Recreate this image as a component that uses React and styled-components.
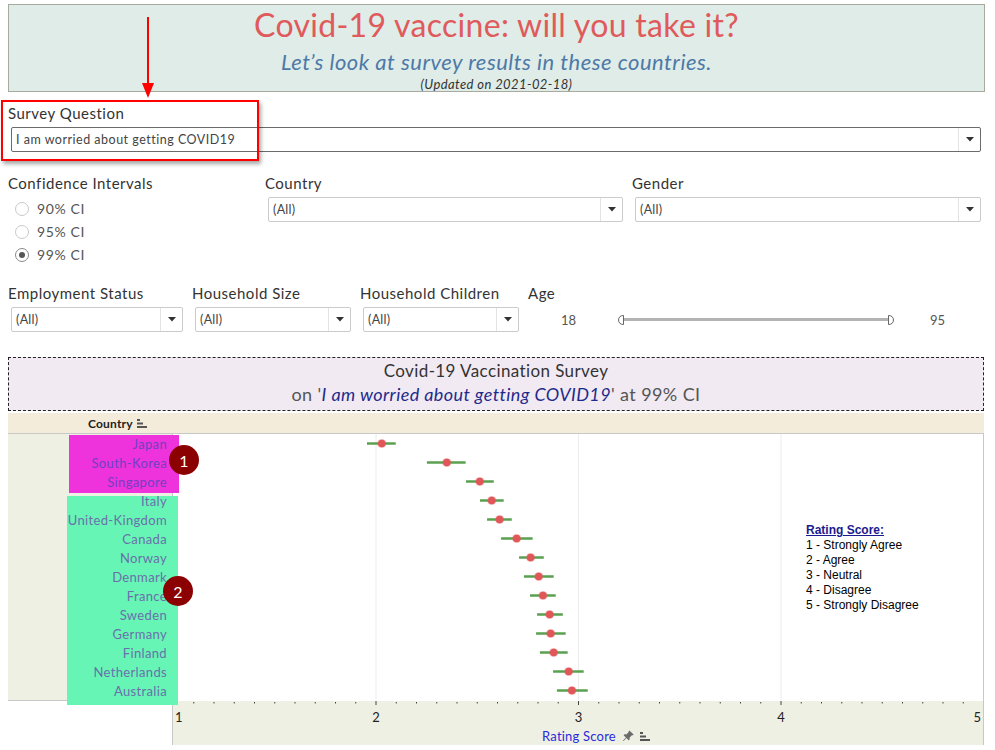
import React from 'react';
import styled, { createGlobalStyle } from 'styled-components';
import { BsPinAngleFill } from 'react-icons/bs';

const GlobalStyle = createGlobalStyle`
  html, body { margin: 0; padding: 0; background: #fff; }
  body { font-family: Lato, "Open Sans", sans-serif; color: #333; }
  * { box-sizing: border-box; }
`;

const rows = [
  { name: 'Japan', mean: 2.031, lo: 1.958, hi: 2.1, group: 1 },
  { name: 'South-Korea', mean: 2.352, lo: 2.254, hi: 2.445, group: 1 },
  { name: 'Singapore', mean: 2.515, lo: 2.447, hi: 2.584, group: 1 },
  { name: 'Italy', mean: 2.574, lo: 2.516, hi: 2.633, group: 2 },
  { name: 'United-Kingdom', mean: 2.613, lo: 2.551, hi: 2.673, group: 2 },
  { name: 'Canada', mean: 2.697, lo: 2.62, hi: 2.776, group: 2 },
  { name: 'Norway', mean: 2.766, lo: 2.709, hi: 2.831, group: 2 },
  { name: 'Denmark', mean: 2.806, lo: 2.733, hi: 2.88, group: 2 },
  { name: 'France', mean: 2.827, lo: 2.763, hi: 2.89, group: 2 },
  { name: 'Sweden', mean: 2.86, lo: 2.798, hi: 2.925, group: 2 },
  { name: 'Germany', mean: 2.865, lo: 2.793, hi: 2.939, group: 2 },
  { name: 'Finland', mean: 2.88, lo: 2.812, hi: 2.949, group: 2 },
  { name: 'Netherlands', mean: 2.954, lo: 2.877, hi: 3.028, group: 2 },
  { name: 'Australia', mean: 2.97, lo: 2.896, hi: 3.048, group: 2 },
];

const PLOT_W = 810;
const ROW_H = 19;
const sx = (v) => (v - 1) * (PLOT_W / 4);

function SortIcon() {
  return (
    <svg width="10" height="9" viewBox="0 0 10 9">
      <rect x="0" y="0" width="3" height="2" fill="#555" />
      <rect x="0" y="3.5" width="6" height="2" fill="#555" />
      <rect x="0" y="7" width="10" height="2" fill="#555" />
    </svg>
  );
}

function Arrow() {
  return (
    <svg width="14" height="81" viewBox="0 0 14 81">
      <line x1="7" y1="0" x2="7" y2="67" stroke="#f00" strokeWidth="2" />
      <polygon points="1,66 13,66 7,81" fill="#f00" />
    </svg>
  );
}

function Select({ value, width, active }) {
  return (
    <SelectBox $width={width} $active={active}>
      <SelectText $wide={active}>{value}</SelectText>
      <SelectArrow>
        <svg width="8" height="5" viewBox="0 0 8 5">
          <polygon points="0,0 8,0 4,4.5" fill="#333" />
        </svg>
      </SelectArrow>
    </SelectBox>
  );
}

function Filter({ label, width, value = '(All)' }) {
  return (
    <FilterCol $width={width}>
      <Label>{label}</Label>
      <Select value={value} width={width - 12} />
    </FilterCol>
  );
}

function Chart() {
  const ticks = [];
  for (let i = 1; i < 40; i++) {
    if (i % 10 !== 0) ticks.push(i / 10 + 1);
  }
  return (
    <ChartWrap>
      <ChartHead>
        <HeadLabel>
          Country <SortIcon />
        </HeadLabel>
      </ChartHead>
      <ChartBody>
        <Highlight $tone="#ee33dd" $top={1} $left={61} $w={110} $h={58} />
        <Highlight $tone="#66f5b4" $top={62} $left={59} $w={111} $h={209} />
        <LabelCol>
          {rows.map((r) => (
            <CountryLabel key={r.name} $group={r.group}>
              {r.name}
            </CountryLabel>
          ))}
        </LabelCol>
        <Plot>
          <svg width={PLOT_W} height={rows.length * ROW_H}>
            {[2, 3, 4].map((v) => (
              <line key={v} x1={sx(v) + 0.5} x2={sx(v) + 0.5} y1="0" y2={rows.length * ROW_H} stroke="#ececec" />
            ))}
            {rows.map((r, i) => {
              const y = i * ROW_H + 9.5;
              return (
                <g key={r.name}>
                  <line x1={sx(r.lo)} x2={sx(r.hi)} y1={y} y2={y} stroke="#59a14f" strokeWidth="2.5" />
                  <circle cx={sx(r.mean)} cy={y} r="4.6" fill="#e15759" opacity="0.35" />
                  <circle cx={sx(r.mean)} cy={y} r="3.8" fill="#e15759" />
                </g>
              );
            })}
          </svg>
          <Legend>
            <LegendTitle>Rating Score:</LegendTitle>
            <div>1 - Strongly Agree</div>
            <div>2 - Agree</div>
            <div>3 - Neutral</div>
            <div>4 - Disagree</div>
            <div>5 - Strongly Disagree</div>
          </Legend>
        </Plot>
        <Badge $top={11} $left={161}>1</Badge>
        <Badge $top={142} $left={155}>2</Badge>
      </ChartBody>
      <AxisRow>
        <AxisBlank />
        <Axis>
          <svg width={PLOT_W} height="28">
            {ticks.map((t) => (
              <rect key={t} x={sx(t)} y="1" width="1" height="1.5" fill="#444" />
            ))}
            {[2, 3, 4].map((v) => (
              <rect key={v} x={sx(v)} y="0" width="1" height="4" fill="#444" />
            ))}
            <text x="2" y="21" fontSize="13" fill="#222" fontFamily="Lato, sans-serif">1</text>
            {[2, 3, 4].map((v) => (
              <text key={v} x={sx(v) + 0.5} y="21" fontSize="13" fill="#222" textAnchor="middle" fontFamily="Lato, sans-serif">
                {v}
              </text>
            ))}
            <text x={PLOT_W - 2} y="21" fontSize="13" fill="#222" textAnchor="end" fontFamily="Lato, sans-serif">5</text>
          </svg>
          <AxisTitle>
            Rating Score
            <BsPinAngleFill size={12} color="#6b6b6b" />
            <SortIcon />
          </AxisTitle>
        </Axis>
      </AxisRow>
    </ChartWrap>
  );
}

export default function App() {
  return (
    <Page>
      <GlobalStyle />
      <Header>
        <Title>Covid-19 vaccine: will you take it?</Title>
        <Subtitle>Let’s look at survey results in these countries.</Subtitle>
        <Updated>(Updated on 2021-02-18)</Updated>
      </Header>

      <QuestionBlock>
        <Label>Survey Question</Label>
        <QuestionSelect>
          <Select value="I am worried about getting COVID19" width={970} active />
        </QuestionSelect>
      </QuestionBlock>

      <FilterRow $top={23}>
        <FilterCol $width={257}>
          <Label>Confidence Intervals</Label>
          <RadioList>
            {['90% CI', '95% CI', '99% CI'].map((c) => (
              <RadioItem key={c}>
                <Radio $checked={c === '99% CI'} />
                {c}
              </RadioItem>
            ))}
          </RadioList>
        </FilterCol>
        <Filter label="Country" width={367} />
        <Filter label="Gender" width={358} />
      </FilterRow>

      <FilterRow $top={19}>
        <Filter label="Employment Status" width={184} />
        <Filter label="Household Size" width={168} />
        <Filter label="Household Children" width={168} />
        <FilterCol $width={453}>
          <Label>Age</Label>
          <AgeRow>
            <AgeValue $w={76}>18</AgeValue>
            <Slider>
              <Handle $side="left" />
              <Track />
              <Handle $side="right" />
            </Slider>
            <AgeValue $w={88}>95</AgeValue>
          </AgeRow>
        </FilterCol>
      </FilterRow>

      <ChartTitle>
        <ChartTitleMain>Covid-19 Vaccination Survey</ChartTitleMain>
        <ChartTitleSub>
          on '<Question>I am worried about getting COVID19</Question>' at 99% CI
        </ChartTitleSub>
      </ChartTitle>

      <Chart />

      <RedFrame />
      <ArrowSpot>
        <Arrow />
      </ArrowSpot>
    </Page>
  );
}

const Page = styled.div`
  position: relative;
  width: 995px;
  height: 750px;
  overflow: hidden;
`;

const Header = styled.div`
  margin: 4px 0 0 8px;
  width: 977px;
  height: 88px;
  background: #dfece8;
  border: 1px solid #a9aa9e;
  display: flex;
  flex-direction: column;
  align-items: center;
`;

const Title = styled.div`
  font-size: 32px;
  line-height: 40px;
  color: #e05a5b;
  letter-spacing: 0.3px;
`;

const Subtitle = styled.div`
  margin-top: 5px;
  font-size: 22px;
  line-height: 24px;
  font-style: italic;
  letter-spacing: 0.5px;
  color: #4e79a7;
`;

const Updated = styled.div`
  margin-top: 3px;
  font-size: 13px;
  line-height: 14px;
  font-style: italic;
  letter-spacing: 0.4px;
  color: #333;
`;

const QuestionBlock = styled.div`
  margin: 13px 0 0 8px;
`;

const Label = styled.div`
  font-size: 15px;
  line-height: 16px;
  letter-spacing: 0.5px;
  color: #333;
  white-space: nowrap;
`;

const QuestionSelect = styled.div`
  margin: 6px 0 0 3px;
`;

const SelectBox = styled.div`
  width: ${(p) => p.$width}px;
  height: 25px;
  display: flex;
  align-items: stretch;
  background: #fff;
  border: 1px solid ${(p) => (p.$active ? '#6b6b6b' : '#cbcbcb')};
  border-radius: 2px;
`;

const SelectText = styled.div`
  flex: 1;
  padding-left: 4px;
  font-size: 12.5px;
  line-height: 23px;
  letter-spacing: ${(p) => (p.$wide ? '0.5px' : '0.3px')};
  color: #444;
  white-space: nowrap;
  overflow: hidden;
`;

const SelectArrow = styled.div`
  width: 22px;
  border-left: 1px solid #e3e3e3;
  display: flex;
  align-items: center;
  justify-content: center;
`;

const FilterRow = styled.div`
  display: flex;
  margin: ${(p) => p.$top}px 0 0 8px;
`;

const FilterCol = styled.div`
  width: ${(p) => p.$width}px;
  display: flex;
  flex-direction: column;
  gap: 6px;
  & > div:last-child { margin-left: 3px; }
`;

const RadioList = styled.div`
  display: flex;
  flex-direction: column;
`;

const RadioItem = styled.div`
  height: 23px;
  display: flex;
  align-items: center;
  gap: 8px;
  padding-left: 4px;
  font-size: 14px;
  letter-spacing: 0.6px;
  color: #555;
`;

const Radio = styled.span`
  width: 14px;
  height: 14px;
  border-radius: 50%;
  border: 1px solid ${(p) => (p.$checked ? '#8a8a8a' : '#c9c9c9')};
  background: #fff;
  display: flex;
  align-items: center;
  justify-content: center;
  &::after {
    content: '';
    width: 6px;
    height: 6px;
    border-radius: 50%;
    background: ${(p) => (p.$checked ? '#555' : 'transparent')};
  }
`;

const AgeRow = styled.div`
  height: 25px;
  display: flex;
  align-items: center;
`;

const AgeValue = styled.div`
  width: ${(p) => p.$w}px;
  text-align: center;
  font-size: 13px;
  color: #555;
`;

const Slider = styled.div`
  width: 279px;
  margin-left: 12px;
  display: flex;
  align-items: center;
`;

const Track = styled.div`
  flex: 1;
  height: 3px;
  background: #b3b3b3;
`;

const Handle = styled.div`
  width: 6px;
  height: 10px;
  background: #fff;
  border: 1px solid #666;
  border-radius: ${(p) => (p.$side === 'left' ? '5px 0 0 5px' : '0 5px 5px 0')};
`;

const ChartTitle = styled.div`
  margin: 25px 0 0 8px;
  width: 976px;
  height: 54px;
  background: #f1eaf2;
  border: 1px dashed #222;
  padding-top: 2px;
  text-align: center;
`;

const ChartTitleMain = styled.div`
  font-size: 17px;
  line-height: 22px;
  letter-spacing: 0.4px;
  color: #333;
`;

const ChartTitleSub = styled.div`
  font-size: 18px;
  line-height: 24px;
  letter-spacing: 0.4px;
  color: #555;
`;

const Question = styled.span`
  font-style: italic;
  color: #1f2b8c;
`;

const ChartWrap = styled.div`
  margin: 2px 0 0 8px;
  width: 976px;
`;

const ChartHead = styled.div`
  height: 21px;
  background: #f3ecdb;
  border-bottom: 1px solid #c8c8c8;
  display: flex;
  align-items: center;
  padding-top: 1px;
`;

const HeadLabel = styled.div`
  margin-left: 80px;
  display: flex;
  align-items: center;
  gap: 4px;
  font-size: 12px;
  font-weight: 700;
  letter-spacing: 0.2px;
  color: #222;
`;

const ChartBody = styled.div`
  position: relative;
  height: 266px;
  display: grid;
  grid-template-columns: 164px 812px;
  background: #eef0e3;
`;

const LabelCol = styled.div`
  display: flex;
  flex-direction: column;
  position: relative;
  z-index: 2;
  padding: 1px 5px 0 0;
`;

const CountryLabel = styled.div`
  height: ${ROW_H}px;
  line-height: ${ROW_H}px;
  text-align: right;
  font-size: 13px;
  letter-spacing: 0.35px;
  color: ${(p) => (p.$group === 1 ? '#7040c0' : '#6a70ab')};
  white-space: nowrap;
`;

const Highlight = styled.div`
  position: absolute;
  top: ${(p) => p.$top}px;
  left: ${(p) => p.$left}px;
  width: ${(p) => p.$w}px;
  height: ${(p) => p.$h}px;
  background: ${(p) => p.$tone};
  z-index: 1;
`;

const Plot = styled.div`
  position: relative;
  background: #fff;
  border-left: 1px solid #c8c8c8;
  border-right: 1px solid #c8c8c8;
  svg { display: block; }
`;

const Legend = styled.div`
  position: absolute;
  left: 633px;
  top: 89px;
  font-family: "Liberation Sans", Arial, sans-serif;
  font-size: 12px;
  line-height: 15px;
  color: #000;
`;

const LegendTitle = styled.div`
  font-weight: 700;
  color: #1a1a8e;
  text-decoration: underline;
`;

const Badge = styled.div`
  position: absolute;
  top: ${(p) => p.$top}px;
  left: ${(p) => p.$left}px;
  width: 30px;
  height: 30px;
  border-radius: 50%;
  background: #8b0000;
  color: #fff;
  font-size: 16px;
  display: flex;
  align-items: center;
  justify-content: center;
  z-index: 3;
`;

const AxisRow = styled.div`
  height: 45px;
  display: grid;
  grid-template-columns: 164px 812px;
  border-top: 1px solid #c8c8c8;
`;

const AxisBlank = styled.div`
  background: #fff;
`;

const Axis = styled.div`
  background: #eef0e3;
  border-left: 1px solid #c8c8c8;
  border-right: 1px solid #c8c8c8;
  svg { display: block; }
`;

const AxisTitle = styled.div`
  display: flex;
  align-items: center;
  justify-content: center;
  gap: 6px;
  margin-left: 36px;
  font-size: 13px;
  line-height: 14px;
  letter-spacing: 0.2px;
  color: #2b2bdc;
`;

const RedFrame = styled.div`
  position: absolute;
  left: 1px;
  top: 100px;
  width: 258px;
  height: 61px;
  border: 2px solid #f00;
  box-shadow: 2px 3px 4px rgba(0, 0, 0, 0.35);
`;

const ArrowSpot = styled.div`
  position: absolute;
  left: 141px;
  top: 17px;
  svg { display: block; }
`;
